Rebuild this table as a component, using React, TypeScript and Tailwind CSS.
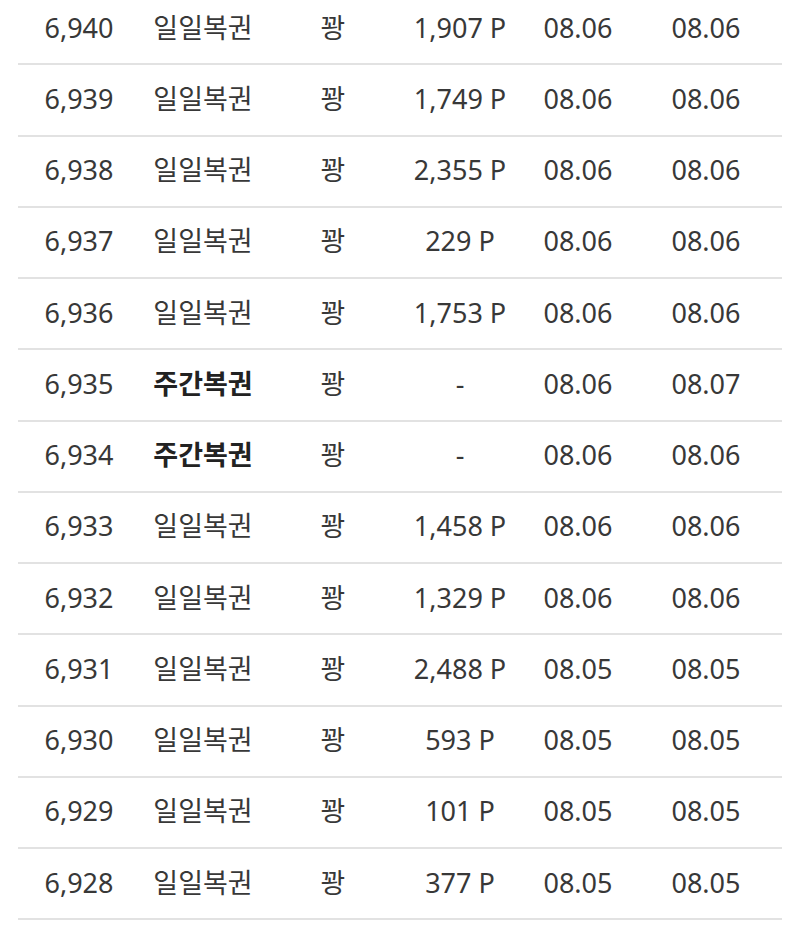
const rows = [
  { no: "6,940", type: "일일복권", bold: false, result: "꽝", point: "1,907 P", d1: "08.06", d2: "08.06" },
  { no: "6,939", type: "일일복권", bold: false, result: "꽝", point: "1,749 P", d1: "08.06", d2: "08.06" },
  { no: "6,938", type: "일일복권", bold: false, result: "꽝", point: "2,355 P", d1: "08.06", d2: "08.06" },
  { no: "6,937", type: "일일복권", bold: false, result: "꽝", point: "229 P", d1: "08.06", d2: "08.06" },
  { no: "6,936", type: "일일복권", bold: false, result: "꽝", point: "1,753 P", d1: "08.06", d2: "08.06" },
  { no: "6,935", type: "주간복권", bold: true, result: "꽝", point: "-", d1: "08.06", d2: "08.07" },
  { no: "6,934", type: "주간복권", bold: true, result: "꽝", point: "-", d1: "08.06", d2: "08.06" },
  { no: "6,933", type: "일일복권", bold: false, result: "꽝", point: "1,458 P", d1: "08.06", d2: "08.06" },
  { no: "6,932", type: "일일복권", bold: false, result: "꽝", point: "1,329 P", d1: "08.06", d2: "08.06" },
  { no: "6,931", type: "일일복권", bold: false, result: "꽝", point: "2,488 P", d1: "08.05", d2: "08.05" },
  { no: "6,930", type: "일일복권", bold: false, result: "꽝", point: "593 P", d1: "08.05", d2: "08.05" },
  { no: "6,929", type: "일일복권", bold: false, result: "꽝", point: "101 P", d1: "08.05", d2: "08.05" },
  { no: "6,928", type: "일일복권", bold: false, result: "꽝", point: "377 P", d1: "08.05", d2: "08.05" },
];

export default function App() {
  return (
    <div
      className="min-h-[925px] w-[800px] overflow-hidden bg-white px-[18px] text-[27px] text-[#383838]"
      style={{ fontFamily: '"Noto Sans", "Noto Sans CJK KR", sans-serif' }}
    >
      {/* 스크롤된 목록: 첫 행이 위로 살짝 잘림 */}
      <div className="-mt-[6px] w-[764px]">
        {rows.map((r) => (
          <div
            key={r.no}
            className="grid h-[71.25px] grid-cols-[122px_126px_134px_120px_116px_140px] items-center border-b-2 border-[#e2e2e2] pb-[3px] leading-none"
          >
            <div className="text-center">{r.no}</div>
            <div className={r.bold ? "text-center font-bold text-[#222222]" : "text-center"}>{r.type}</div>
            <div className="text-center">{r.result}</div>
            <div className="text-center">{r.point}</div>
            <div className="text-center">{r.d1}</div>
            <div className="text-center">{r.d2}</div>
          </div>
        ))}
      </div>
    </div>
  );
}
